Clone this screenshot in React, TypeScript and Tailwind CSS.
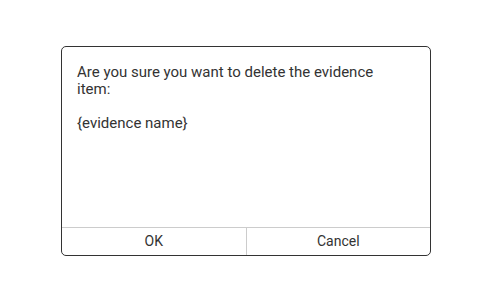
export default function App() {
  return (
    <div className="w-[492px] h-[302px] bg-white pt-[46px] pl-[61px] font-['Roboto',sans-serif] text-[15px] text-[#333]">
      <div className="w-[370px] h-[210px] border border-[#333] rounded-[5px] flex flex-col overflow-hidden">
        <div className="flex-1 pl-[15px] pr-[24px] pt-[17px] leading-[17px]">
          <p>Are you sure you want to delete the evidence item:</p>
          <p className="mt-[17px]">{"{evidence name}"}</p>
        </div>
        <div className="h-[28px] flex border-t border-[#ccc] text-[14px]">
          <button className="flex-1 flex items-center justify-center">OK</button>
          <button className="flex-1 flex items-center justify-center border-l border-[#ccc]">Cancel</button>
        </div>
      </div>
    </div>
  );
}
